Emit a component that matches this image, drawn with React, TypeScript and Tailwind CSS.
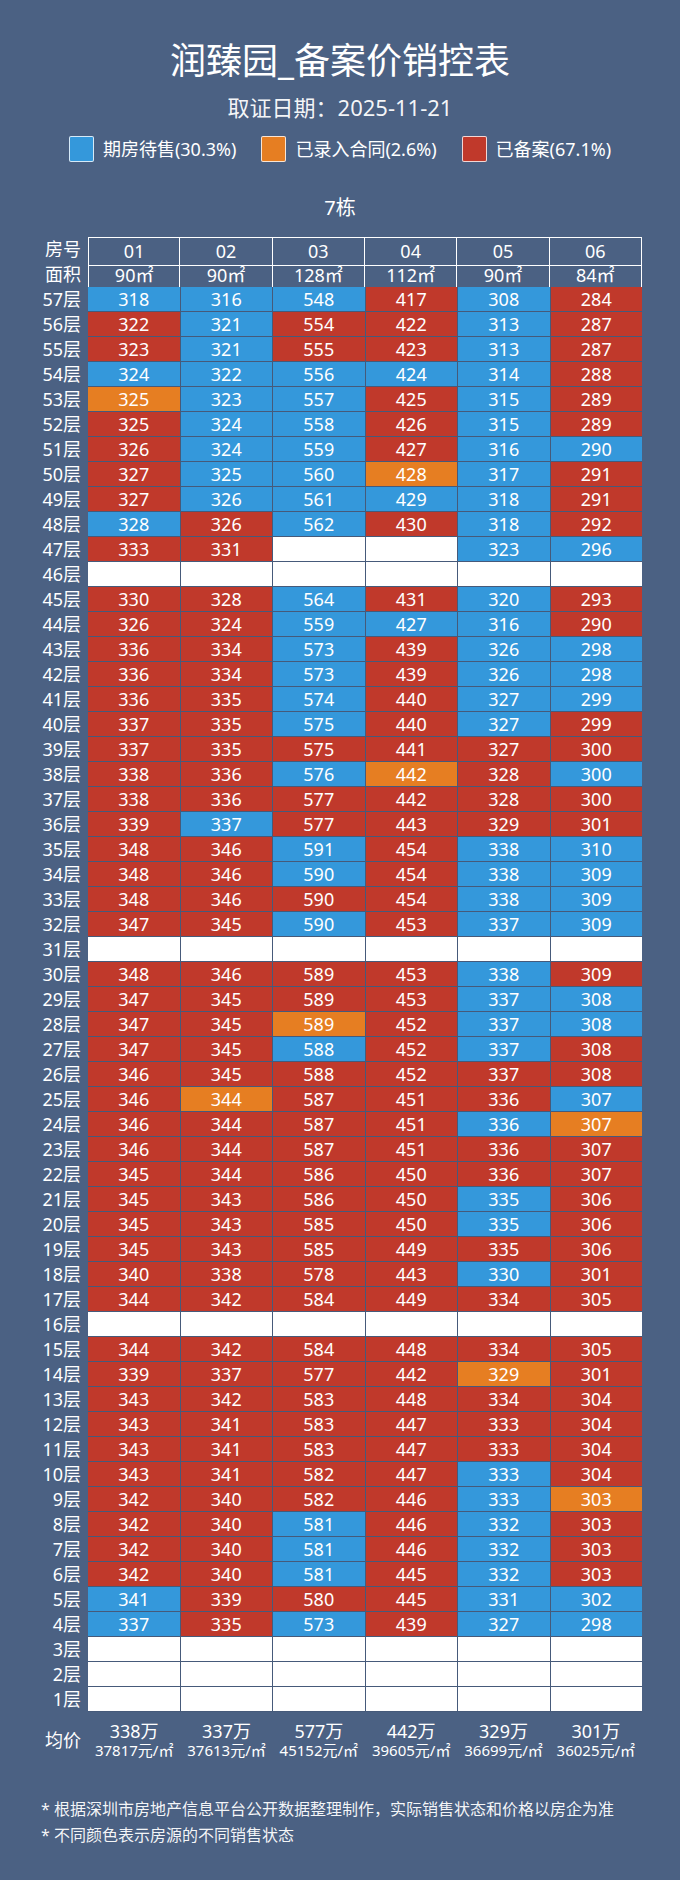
import React from 'react';

type Status = 'B' | 'O' | 'R' | 'W';

interface Unit {
  price?: string;
  status: Status;
}

const FONT = { fontFamily: '"Noto Sans", "Noto Sans CJK SC", sans-serif' };

const COLS = [
  { no: '01', area: '90㎡', total: '338万', unit: '37817元/㎡' },
  { no: '02', area: '90㎡', total: '337万', unit: '37613元/㎡' },
  { no: '03', area: '128㎡', total: '577万', unit: '45152元/㎡' },
  { no: '04', area: '112㎡', total: '442万', unit: '39605元/㎡' },
  { no: '05', area: '90㎡', total: '329万', unit: '36699元/㎡' },
  { no: '06', area: '84㎡', total: '301万', unit: '36025元/㎡' },
];

// floor -> 6 units, "318B" = price + status (B 待售, O 已录入合同, R 已备案), "-" = empty
const RAW: Record<number, string> = {
  57: '318B 316B 548B 417R 308B 284R',
  56: '322R 321B 554R 422R 313B 287R',
  55: '323R 321B 555R 423R 313B 287R',
  54: '324B 322B 556B 424B 314B 288R',
  53: '325O 323B 557B 425R 315B 289R',
  52: '325R 324B 558B 426R 315B 289R',
  51: '326R 324B 559B 427R 316B 290B',
  50: '327R 325B 560B 428O 317B 291R',
  49: '327R 326B 561B 429B 318B 291R',
  48: '328B 326R 562B 430R 318B 292R',
  47: '333R 331R - - 323B 296B',
  45: '330R 328R 564B 431R 320B 293R',
  44: '326R 324R 559B 427B 316B 290R',
  43: '336R 334R 573B 439R 326B 298B',
  42: '336R 334R 573B 439R 326B 298B',
  41: '336R 335R 574B 440R 327B 299B',
  40: '337R 335R 575B 440R 327B 299R',
  39: '337R 335R 575R 441R 327R 300R',
  38: '338R 336R 576B 442O 328R 300B',
  37: '338R 336R 577R 442R 328R 300R',
  36: '339R 337B 577R 443R 329R 301R',
  35: '348R 346R 591B 454R 338B 310B',
  34: '348R 346R 590B 454R 338B 309B',
  33: '348R 346R 590R 454R 338B 309B',
  32: '347R 345R 590B 453R 337B 309B',
  30: '348R 346R 589R 453R 338B 309R',
  29: '347R 345R 589R 453R 337B 308B',
  28: '347R 345R 589O 452R 337B 308B',
  27: '347R 345R 588B 452R 337B 308R',
  26: '346R 345R 588R 452R 337R 308R',
  25: '346R 344O 587R 451R 336R 307B',
  24: '346R 344R 587R 451R 336B 307O',
  23: '346R 344R 587R 451R 336R 307R',
  22: '345R 344R 586R 450R 336R 307R',
  21: '345R 343R 586R 450R 335B 306R',
  20: '345R 343R 585R 450R 335B 306R',
  19: '345R 343R 585R 449R 335R 306R',
  18: '340R 338R 578R 443R 330B 301R',
  17: '344R 342R 584R 449R 334R 305R',
  15: '344R 342R 584R 448R 334R 305R',
  14: '339R 337R 577R 442R 329O 301R',
  13: '343R 342R 583R 448R 334R 304R',
  12: '343R 341R 583R 447R 333R 304R',
  11: '343R 341R 583R 447R 333R 304R',
  10: '343R 341R 582R 447R 333B 304R',
  9: '342R 340R 582R 446R 333B 303O',
  8: '342R 340R 581B 446R 332B 303R',
  7: '342R 340R 581B 446R 332B 303R',
  6: '342R 340R 581B 445R 332B 303R',
  5: '341B 339R 580R 445R 331B 302B',
  4: '337B 335R 573B 439R 327B 298B',
};

function unitsFor(floor: number): Unit[] {
  const raw = RAW[floor];
  if (!raw) return Array.from({ length: 6 }, () => ({ status: 'W' as Status }));
  return raw.split(' ').map((t) =>
    t === '-' ? { status: 'W' as Status } : { price: t.slice(0, -1), status: t.slice(-1) as Status }
  );
}

const CELL_BG: Record<Status, string> = {
  B: 'bg-[#3498db]',
  O: 'bg-[#e67e22]',
  R: 'bg-[#c0392b]',
  W: 'bg-white',
};

const FLOORS = Array.from({ length: 57 }, (_, i) => 57 - i);

function LegendItem({ color, label }: { color: string; label: string }) {
  return (
    <div className="flex items-center gap-[9px]">
      <span className={`w-[25px] h-[26px] rounded-[2px] border border-white/80 ${color}`} />
      <span className="text-[18px] leading-[26px] text-white">{label}</span>
    </div>
  );
}

function HeaderRow({ label, values, first }: { label: string; values: string[]; first?: boolean }) {
  return (
    <div className="flex h-[25px]">
      <div className="w-[88px] pr-[7px] text-right text-[18px] leading-[25px] text-white">{label}</div>
      <div className="grid grid-cols-6 w-[554px]">
        {values.map((v, i) => (
          <div
            key={i}
            className={`border-white border-b border-r ${i === 0 ? 'border-l' : ''} ${first ? 'border-t' : ''} flex items-center justify-center text-[18px] text-white`}
          >
            {v}
          </div>
        ))}
      </div>
    </div>
  );
}

export default function App() {
  return (
    <div className="w-[680px] h-[1880px] overflow-hidden bg-[#4b6183] text-white" style={FONT}>
      {/* Title */}
      <h1 className="pt-[39px] text-center text-[36px] leading-[44px] font-normal">润臻园_备案价销控表</h1>
      <p className="mt-[9px] text-center text-[22px] leading-[30px] text-white/95">取证日期：2025-11-21</p>

      {/* Legend */}
      <div className="mt-[14px] flex justify-center gap-[25px]">
        <LegendItem color="bg-[#3498db]" label="期房待售(30.3%)" />
        <LegendItem color="bg-[#e67e22]" label="已录入合同(2.6%)" />
        <LegendItem color="bg-[#c0392b]" label="已备案(67.1%)" />
      </div>

      <h2 className="mt-[32px] text-center text-[20px] leading-[28px]">7栋</h2>

      {/* Sales table */}
      <div className="mt-[15px] w-[642px]">
        <HeaderRow label="房号" values={COLS.map((c) => c.no)} first />
        <HeaderRow label="面积" values={COLS.map((c) => c.area)} />

        {FLOORS.map((floor) => (
          <div key={floor} className="flex h-[25px]">
            <div className="w-[88px] pr-[7px] text-right text-[18px] leading-[25px]">{floor}层</div>
            <div className="grid grid-cols-6 gap-x-px w-[554px] h-[25px] pb-px bg-[#465a7a]">
              {unitsFor(floor).map((u, i) => (
                <div
                  key={i}
                  className={`${CELL_BG[u.status]} h-[24px] flex items-center justify-center text-[18px] leading-[24px] text-white`}
                >
                  {u.price}
                </div>
              ))}
            </div>
          </div>
        ))}

        {/* Average price */}
        <div className="mt-[9px] h-[38px] flex items-center">
          <div className="w-[88px] pr-[7px] text-right text-[18px] leading-[25px]">均价</div>
          <div className="grid grid-cols-6 w-[554px] h-[38px]">
            {COLS.map((c) => (
              <div key={c.no} className="flex flex-col items-center">
                <span className="block h-[20px] text-[18px] leading-[20px]">{c.total}</span>
                <span className="block h-[18px] text-[15px] leading-[18px] whitespace-nowrap">{c.unit}</span>
              </div>
            ))}
          </div>
        </div>
      </div>

      {/* Notes */}
      <div className="mt-[37px] pl-[41px] text-[16px] leading-[26px] text-white/95">
        <p className="h-[26px]">* 根据深圳市房地产信息平台公开数据整理制作，实际销售状态和价格以房企为准</p>
        <p className="h-[26px]">* 不同颜色表示房源的不同销售状态</p>
      </div>
    </div>
  );
}
